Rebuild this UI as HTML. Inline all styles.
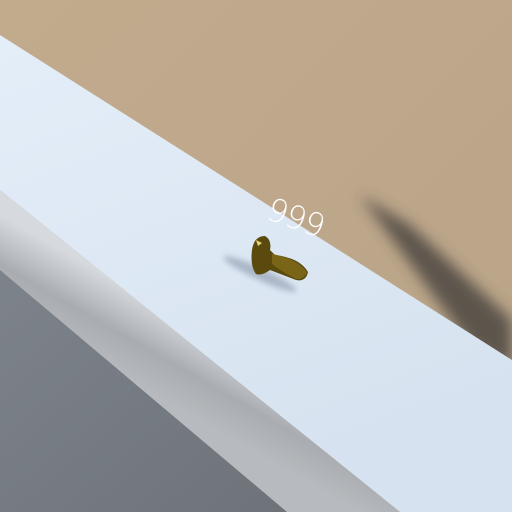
<!DOCTYPE html>
<html><head><style>
html,body{margin:0;padding:0;width:512px;height:512px;overflow:hidden;background:#bea78b}
svg{display:block}
</style></head><body>
<svg width="512" height="512" viewBox="0 0 512 512" xmlns="http://www.w3.org/2000/svg">
<defs>
<linearGradient id="tan" x1="0" y1="0" x2="1" y2="1">
<stop offset="0" stop-color="#c2aa8d"/><stop offset="1" stop-color="#b9a488"/>
</linearGradient>
<linearGradient id="top" x1="0" y1="0" x2="0.4" y2="1">
<stop offset="0" stop-color="#e4eef9"/><stop offset="1" stop-color="#d6e2ef"/>
</linearGradient>
<linearGradient id="front" gradientUnits="userSpaceOnUse" x1="150" y1="300" x2="110" y2="370">
<stop offset="0" stop-color="#d6dadf"/><stop offset="0.55" stop-color="#a9acb0"/><stop offset="1" stop-color="#b7babe"/>
</linearGradient>
<linearGradient id="floor" x1="0" y1="0" x2="1" y2="1">
<stop offset="0" stop-color="#7d838b"/><stop offset="1" stop-color="#6e737a"/>
</linearGradient>
<filter id="b" x="-50%" y="-50%" width="200%" height="200%"><feGaussianBlur stdDeviation="7"/></filter>
<filter id="b2" x="-50%" y="-50%" width="200%" height="200%"><feGaussianBlur stdDeviation="3"/></filter>
</defs>
<rect width="512" height="512" fill="url(#tan)"/>
<polygon points="360,195 410,225 512,320 512,372 470,345" fill="#3e3b39" opacity="0.75" filter="url(#b)"/>
<polygon points="0,35 512,360 512,512 400,512 0,190" fill="url(#top)"/>
<polygon points="0,190 400,512 287,512 0,270" fill="url(#front)"/>
<polygon points="0,270 287,512 0,512" fill="url(#floor)"/>
<ellipse cx="260" cy="274" rx="40" ry="6" transform="rotate(25 260 274)" fill="#8a96aa" opacity="0.6" filter="url(#b2)"/>
<path d="M252,250 Q254,236 265,236 Q272,240 270,250 L275,255 Q300,258 308,272 Q306,282 296,280 Q283,275 270,270 Q262,276 256,274 Q250,266 252,250Z" fill="#5a4a0e"/>
<path d="M272,254 Q296,258 307,272 Q304,280 296,279 Q282,272 272,264Z" fill="#7a6418"/>
<path d="M256,240 L262,243 L258,246Z" fill="#e9d27a"/>
<text x="292" y="228" transform="rotate(20 292 228)" font-family="DejaVu Sans, sans-serif" font-size="32" font-weight="200" fill="#ffffff" text-anchor="middle" letter-spacing="-1">999</text>
</svg>
</body></html>
